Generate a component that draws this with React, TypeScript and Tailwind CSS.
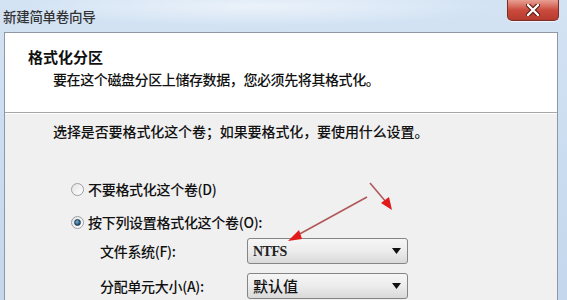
import React from "react";

const cjk = { fontFamily: '"Noto Sans CJK SC", "Noto Sans", sans-serif' };

function Radio({ checked }: { checked?: boolean }) {
  return (
    <div className="w-[13px] h-[13px] rounded-full border border-[#9a9ea4] bg-gradient-to-br from-[#e4e4e4] to-[#ffffff] flex items-center justify-center shrink-0">
      {checked && (
        <div className="w-[7px] h-[7px] rounded-full bg-[radial-gradient(circle_at_40%_35%,#7fb2d6,#1d4f73_70%)] border border-[#1b3d57]" />
      )}
    </div>
  );
}

function Combo({ children, serif }: { children: React.ReactNode; serif?: boolean }) {
  return (
    <div className="w-[161px] h-[26px] rounded-[3px] border border-[#858585] bg-gradient-to-b from-[#f6f6f6] via-[#ececec] to-[#d9d9d9] flex items-center pl-[5px] pr-[6px] shrink-0">
      <span
        className={serif ? "text-[14px] font-bold text-[#222] tracking-[-0.5px]" : "text-[15px] font-medium text-[#111]"}
        style={serif ? { fontFamily: '"Liberation Serif", serif' } : cjk}
      >
        {children}
      </span>
      <svg className="ml-auto" width="9" height="6" viewBox="0 0 9 6">
        <path d="M0 0 L9 0 L4.5 6 Z" fill="#111" />
      </svg>
    </div>
  );
}

export default function App() {
  return (
    <div className="relative w-[567px] h-[300px] overflow-hidden bg-gradient-to-b from-[#d3e3f4] to-[#c4d7ec]" style={cjk}>
      {/* title bar */}
      <div className="h-[32px] flex items-start bg-[radial-gradient(ellipse_at_45%_20%,rgba(255,255,255,0.55),rgba(255,255,255,0)_55%)]">
        <div className="pl-[3px] pt-[6px] text-[13.5px] leading-[20px] font-medium text-[#333] tracking-[-0.3px]">新建简单卷向导</div>
        <div className="ml-auto mr-[8px] w-[52px] h-[21px] rounded-b-[5px] border border-t-0 border-[#7a2f26] bg-gradient-to-b from-[#e7a093] via-[#cb4b3e] to-[#b53a2e] flex items-center justify-center shadow-[0_1px_0_rgba(255,255,255,0.7)]">
          <svg width="14" height="12" viewBox="0 0 14 12">
            <path d="M2 1 L12 11 M12 1 L2 11" stroke="#5a1a14" strokeWidth="4.5" strokeLinecap="round" />
            <path d="M2 1 L12 11 M12 1 L2 11" stroke="#ffffff" strokeWidth="2.4" strokeLinecap="round" />
          </svg>
        </div>
      </div>

      {/* content panel */}
      <div className="ml-[4px] w-[554px] h-[300px] border border-[#8d98a4] flex flex-col">
        {/* header */}
        <div className="h-[79px] bg-white flex flex-col pl-[23px] pt-[14px]">
          <div className="text-[15px] leading-[20px] font-bold text-[#111]">格式化分区</div>
          <div className="mt-[2px] pl-[25px] text-[14px] leading-[20px] font-medium text-[#111] tracking-[-0.4px]">
            要在这个磁盘分区上储存数据，您必须先将其格式化。
          </div>
        </div>
        <div className="h-[2px] bg-[#a7a7a7] border-b border-white" />
        {/* body */}
        <div className="flex-1 bg-[#f0f0f0] flex flex-col pt-[7px]">
          <div className="pl-[48px] h-[20px] text-[14px] leading-[20px] font-medium text-[#111] tracking-[-0.1px]">
            选择是否要格式化这个卷；如果要格式化，要使用什么设置。
          </div>
          <div className="mt-[38px] h-[20px] flex items-center pl-[66px] gap-[4px]">
            <Radio />
            <span className="text-[14px] leading-[20px] font-medium text-[#111] tracking-[-0.3px]">不要格式化这个卷(D)</span>
          </div>
          <div className="mt-[13px] h-[20px] flex items-center pl-[66px] gap-[4px]">
            <Radio checked />
            <span className="text-[14px] leading-[20px] font-medium text-[#111] tracking-[-0.3px]">按下列设置格式化这个卷(O):</span>
          </div>
          <div className="mt-[6px] flex items-center">
            <span className="pl-[95px] w-[242px] text-[14px] leading-[20px] font-medium text-[#111] tracking-[-0.3px]">文件系统(F):</span>
            <Combo serif>NTFS</Combo>
          </div>
          <div className="mt-[9px] flex items-center">
            <span className="pl-[95px] w-[242px] text-[14px] leading-[20px] font-medium text-[#111] tracking-[-0.3px]">分配单元大小(A):</span>
            <Combo>默认值</Combo>
          </div>
        </div>
      </div>

      {/* red annotation arrows */}
      <svg className="absolute left-0 top-0 pointer-events-none" width="567" height="300" viewBox="0 0 567 300">
        <line x1="367" y1="197" x2="296" y2="236" stroke="#b0585a" strokeWidth="1.6" />
        <path d="M288 241 L299 230 L302 239 Z" fill="#e11a1a" />
        <line x1="370" y1="183" x2="386" y2="202" stroke="#b0585a" strokeWidth="1.6" />
        <path d="M392 210 L381 203 L389 197 Z" fill="#e11a1a" />
      </svg>
    </div>
  );
}
